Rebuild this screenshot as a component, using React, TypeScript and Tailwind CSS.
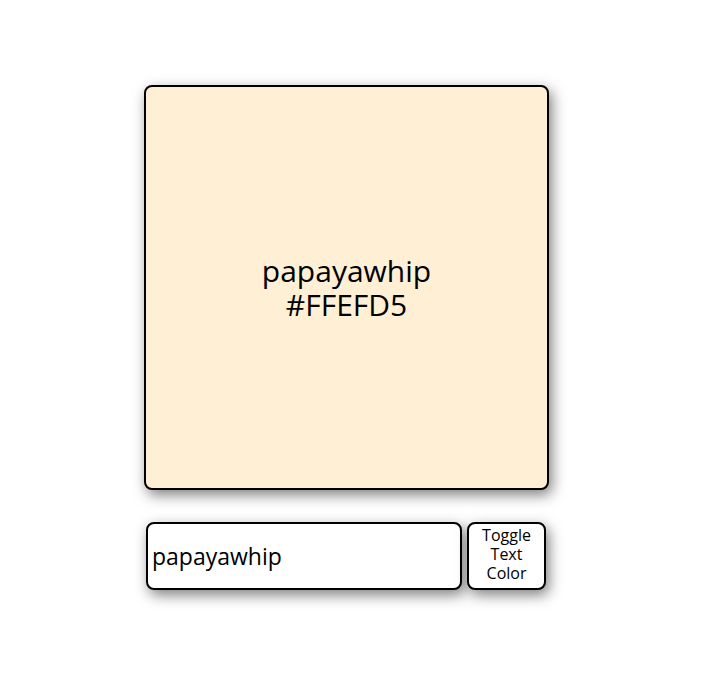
import { useState } from "react";

export default function App() {
  const [name, setName] = useState("papayawhip");
  const [dark, setDark] = useState(true);

  return (
    <div className="min-h-[678px] bg-white pl-[144px] pt-[85px] font-['Open_Sans','Noto_Sans',sans-serif]">
      {/* 색상 미리보기 */}
      <div
        className={`flex h-[405px] w-[405px] flex-col items-center justify-center rounded-lg border-2 border-black bg-[#FFEFD5] text-[30px] leading-[34px] shadow-[3px_5px_14px_rgba(0,0,0,0.5)] ${
          dark ? "text-black" : "text-white"
        }`}
      >
        <span>{name}</span>
        <span>#FFEFD5</span>
      </div>

      {/* 입력 영역 */}
      <div className="ml-[2px] mt-[32px] flex w-[400px] gap-[5px]">
        <input
          value={name}
          onChange={(e) => setName(e.target.value)}
          className="h-[68px] w-[316px] rounded-lg border-2 border-black bg-white px-[4px] text-[23px] text-black shadow-[3px_5px_14px_rgba(0,0,0,0.5)] outline-none"
        />
        <button
          onClick={() => setDark(!dark)}
          className="flex h-[68px] w-[79px] items-center justify-center rounded-lg border-2 border-black bg-white pb-[3px] text-[16px] leading-[19px] text-black shadow-[3px_5px_14px_rgba(0,0,0,0.5)]"
        >
          Toggle
          <br />
          Text
          <br />
          Color
        </button>
      </div>
    </div>
  );
}
